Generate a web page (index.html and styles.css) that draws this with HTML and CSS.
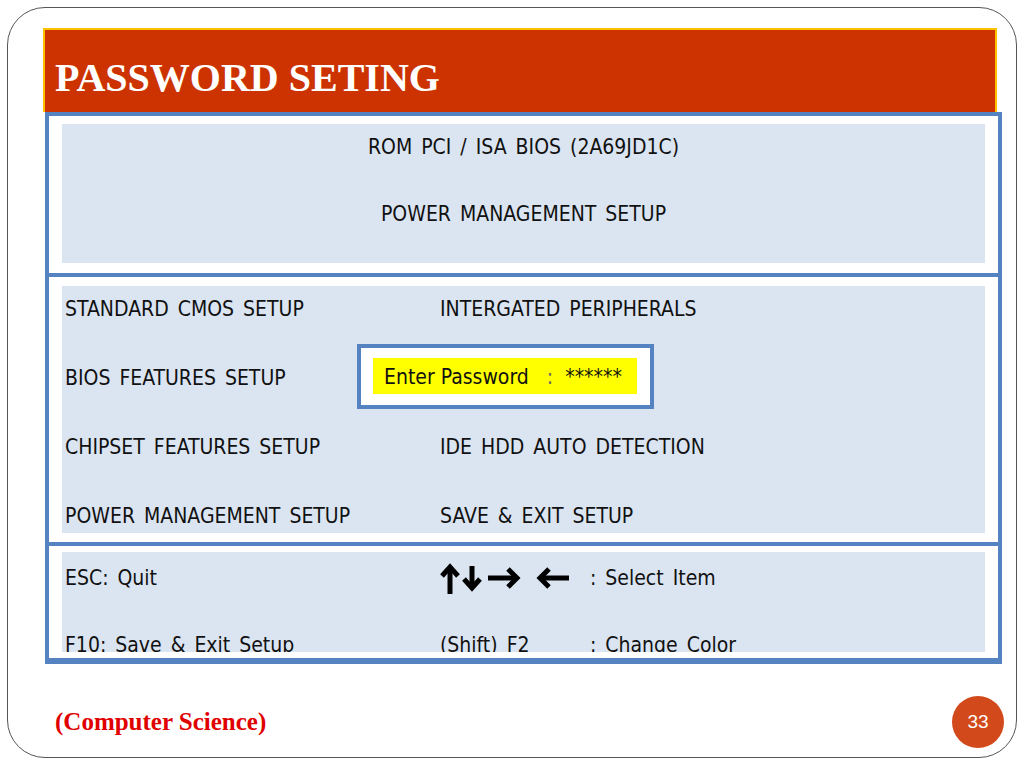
FILE: index.html
```html
<!DOCTYPE html>
<html lang="en">
<head>
    <meta charset="UTF-8">
    <meta name="viewport" content="width=device-width, initial-scale=1.0">
    <title>Password Seting</title>
    <link rel="stylesheet" href="styles.css">
</head>
<body>
    <div class="slide">
        <div class="title-bar">
            <h1>PASSWORD SETING</h1>
        </div>

        <!-- BIOS screen -->
        <div class="bios">
            <div class="bios-section top">
                <div class="panel head">
                    <p>ROM PCI / ISA BIOS (2A69JD1C)</p>
                    <p>POWER MANAGEMENT SETUP</p>
                </div>
            </div>

            <div class="bios-section middle">
                <div class="panel menu">
                    <p>STANDARD CMOS SETUP</p>
                    <p>INTERGATED PERIPHERALS</p>
                    <p>BIOS FEATURES SETUP</p>
                    <p></p>
                    <p>CHIPSET FEATURES SETUP</p>
                    <p>IDE HDD AUTO DETECTION</p>
                    <p>POWER MANAGEMENT SETUP</p>
                    <p>SAVE &amp; EXIT SETUP</p>

                    <div class="password-box">
                        <div class="password-field">Enter Password   <span class="colon">:</span>  ******</div>
                    </div>
                </div>
            </div>

            <div class="bios-section bottom">
                <div class="panel keys">
                    <p>ESC: Quit</p>
                    <div class="arrows">
                        <svg width="132" height="32" viewBox="0 0 132 32" fill="none" stroke="#000" stroke-width="5" stroke-linejoin="miter" stroke-linecap="butt">
                            <path d="M10 31V4"/>
                            <path d="M2 13L10 4L18 13"/>
                            <path d="M32 3V25"/>
                            <path d="M24 16L32 25L40 16"/>
                            <path d="M48 15H77"/>
                            <path d="M68 6L77 15L68 24"/>
                            <path d="M129 15H100"/>
                            <path d="M109 6L100 15L109 24"/>
                        </svg>
                    </div>
                    <p>: Select Item</p>
                    <p>F10: Save &amp; Exit Setup</p>
                    <p>(Shift) F2</p>
                    <p>: Change Color</p>
                </div>
            </div>
        </div>

        <div class="footer">
            <span class="subject">(Computer Science)</span>
            <span class="page-num">33</span>
        </div>
    </div>
</body>
</html>
```

FILE: styles.css
```css
body {
    margin: 0;
    padding: 0;
    background: #fff;
}

.slide {
    box-sizing: border-box;
    width: 1010px;
    height: 751px;
    margin: 7px;
    border: 1px solid #555;
    border-radius: 38px;
}

/* Title */
.title-bar {
    box-sizing: border-box;
    width: 954px;
    height: 84px;
    margin: 20px 0 0 35px;
    padding: 28px 0 0 10px;
    background-color: #cc3300;
    border: 2px solid #ffc000;
    border-bottom: none;
}

.title-bar h1 {
    margin: 0;
    font-family: "Liberation Serif", serif;
    font-size: 40px;
    line-height: 40px;
    font-weight: bold;
    color: #fff;
}

/* BIOS screen */
.bios {
    width: 957px;
    margin-left: 37px;
    box-sizing: border-box;
    border: 4px solid #5583c1;
    border-bottom-width: 6px;
    background: #fff;
    font-family: "DejaVu Sans Condensed", "DejaVu Sans", sans-serif;
    font-stretch: condensed;
    font-size: 21px;
    color: #111;
}

.bios-section + .bios-section {
    border-top: 4px solid #5583c1;
}

.bios-section.top {
    padding: 8px 13px 10px 13px;
}

.bios-section.middle {
    padding: 9px 13px;
}

.bios-section.bottom {
    padding: 6px 13px;
}

.panel {
    box-sizing: border-box;
    background-color: #dbe5f1;
}

.panel p {
    margin: 0;
    line-height: 24px;
    white-space: pre;
    word-spacing: 3px;
}

.head {
    height: 139px;
    padding-top: 11px;
    display: flex;
    flex-direction: column;
    align-items: center;
    gap: 43px;
}

.menu {
    position: relative;
    height: 247px;
    padding: 11px 0 0 3px;
    display: grid;
    grid-template-columns: 375px 1fr;
    grid-auto-rows: 24px;
    row-gap: 45px;
}

.keys {
    height: 100px;
    overflow: hidden;
    padding: 14px 0 0 3px;
    display: grid;
    grid-template-columns: 375px 150px 1fr;
    grid-auto-rows: 24px;
    row-gap: 43px;
}

.arrows {
    display: flex;
    align-items: center;
    height: 24px;
}

.arrows svg {
    display: block;
    margin-top: 1px;
}

/* Password dialog over the menu */
.password-box {
    position: absolute;
    left: 295px;
    top: 58px;
    width: 297px;
    height: 65px;
    box-sizing: border-box;
    border: 4px solid #5583c1;
    background: #fff;
    padding: 10px 13px 11px 12px;
}

.password-field {
    height: 36px;
    background-color: #ffff00;
    padding-left: 11px;
    line-height: 38px;
    white-space: pre;
}

.password-field .colon {
    color: #666;
}

/* Footer */
.footer {
    display: flex;
    justify-content: space-between;
    align-items: center;
    padding: 32px 12px 0 47px;
}

.subject {
    font-family: "Liberation Serif", serif;
    font-weight: bold;
    font-size: 25px;
    color: #e00000;
}

.page-num {
    width: 52px;
    height: 52px;
    border-radius: 50%;
    background-color: #d2491b;
    color: #fff;
    font-family: "Liberation Sans", Arial, sans-serif;
    font-size: 19px;
    line-height: 52px;
    text-align: center;
}
```
